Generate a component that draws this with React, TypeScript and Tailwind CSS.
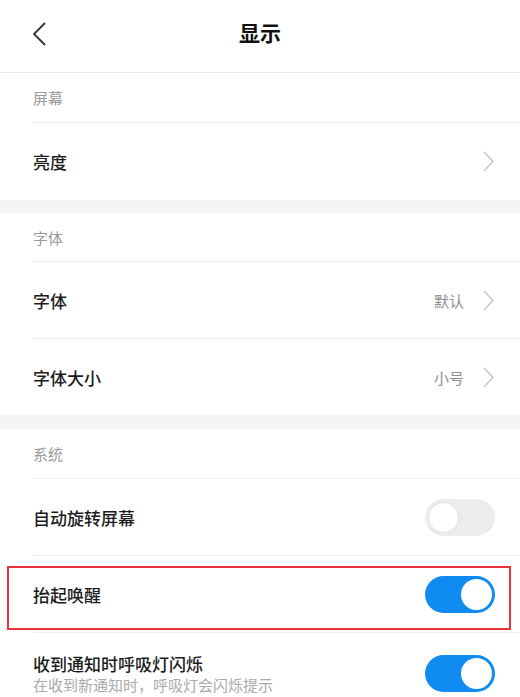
const font = { fontFamily: '"Noto Sans CJK SC", "Noto Sans", sans-serif' };

const Chevron = () => (
  <svg width="11" height="21" viewBox="0 0 11 21" fill="none" className="shrink-0">
    <path d="M1 1 L10 10.5 L1 20" stroke="#c4c4c4" strokeWidth="1.4" />
  </svg>
);

const BackArrow = () => (
  <svg width="14" height="24" viewBox="0 0 14 24" fill="none" className="absolute left-[32px] top-[22px]">
    <path d="M13 1 L2 12 L13 23" stroke="#333333" strokeWidth="1.8" />
  </svg>
);

const Toggle = ({ on }: { on: boolean }) =>
  on ? (
    <div className="w-[70px] h-[37px] rounded-full bg-[#0f8bf2] p-[3px] flex justify-end shrink-0">
      <div className="w-[31px] h-[31px] rounded-full bg-white" />
    </div>
  ) : (
    <div className="w-[70px] h-[37px] rounded-full bg-[#ececec] p-[3px] flex justify-start shrink-0">
      <div className="w-[31px] h-[31px] rounded-full bg-white border border-[#e2e2e2]" />
    </div>
  );

const SectionTitle = ({ text, h }: { text: string; h: string }) => (
  <div className={`${h} pl-[33px] flex items-center`}>
    <div className="flex-1 h-full flex items-center border-b border-[#eeeeee] text-[15px] text-[#9a9a9a] leading-none">
      {text}
    </div>
  </div>
);

const LinkRow = ({ title, value, last, h }: { title: string; value?: string; last?: boolean; h: string }) => (
  <div className={`${h} pl-[33px] flex`}>
    <div
      className={`flex-1 flex items-center justify-between pr-[26px] ${last ? '' : 'border-b border-[#eeeeee]'}`}
    >
      <span className="text-[17px] text-[#1c1c1c] font-medium leading-none">{title}</span>
      <div className="flex items-center gap-[19px]">
        {value && <span className="text-[15px] text-[#8c8c8c] leading-none">{value}</span>}
        <Chevron />
      </div>
    </div>
  </div>
);

export default function App() {
  return (
    <div className="w-[520px] h-[697px] bg-white overflow-hidden" style={font}>
      {/* header */}
      <div className="h-[73px] border-b border-[#ebebeb] flex items-center relative">
        <BackArrow />
        <div className="flex-1 text-center text-[21px] text-[#111] font-bold leading-none -mt-[8px]">显示</div>
      </div>

      <SectionTitle text="屏幕" h="h-[50px]" />
      <LinkRow title="亮度" h="h-[77px]" last />
      <div className="h-[13px] bg-[#f5f5f5]" />

      <SectionTitle text="字体" h="h-[49px]" />
      <LinkRow title="字体" value="默认" h="h-[77px]" />
      <LinkRow title="字体大小" value="小号" h="h-[76px]" last />
      <div className="h-[14px] bg-[#f5f5f5]" />

      <SectionTitle text="系统" h="h-[50px]" />
      <div className="h-[77px] pl-[33px] flex">
        <div className="flex-1 flex items-center justify-between pr-[25px] border-b border-[#eeeeee]">
          <span className="text-[17px] text-[#1c1c1c] font-medium leading-none">自动旋转屏幕</span>
          <Toggle on={false} />
        </div>
      </div>
      <div className="h-[77px] pl-[33px] flex relative">
        <div className="flex-1 flex items-center justify-between pr-[25px] border-b border-[#eeeeee]">
          <span className="text-[17px] text-[#1c1c1c] font-medium leading-none">抬起唤醒</span>
          <Toggle on />
        </div>
        <div className="absolute top-[10px] bottom-[3px] left-[7px] right-[9px] border-2 border-[#e8323c]" />
      </div>
      <div className="pl-[33px] pr-[25px] pt-[22px] flex justify-between">
        <div className="flex flex-col gap-[5px]">
          <span className="text-[17px] text-[#1c1c1c] font-medium leading-none">收到通知时呼吸灯闪烁</span>
          <span className="text-[15px] text-[#aaaaaa] leading-none">在收到新通知时，呼吸灯会闪烁提示</span>
        </div>
        <Toggle on />
      </div>
    </div>
  );
}
